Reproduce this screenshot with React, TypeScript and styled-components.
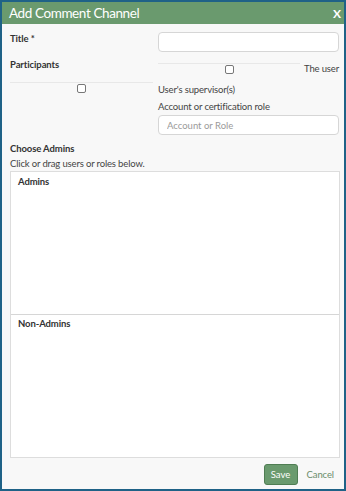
import React from "react";
import styled, { createGlobalStyle } from "styled-components";

const Global = createGlobalStyle`
  html, body { margin: 0; padding: 0; background: #ffffff; }
  * { box-sizing: border-box; }
`;

const Frame = styled.div`
  width: 346px;
  height: 491px;
  border: 2px solid #1f6287;
  background: #f8f8f8;
  display: flex;
  flex-direction: column;
  font-family: Lato, "Noto Sans", sans-serif;
  color: #333333;
`;

const Header = styled.div`
  height: 22px;
  flex: none;
  background: #6a9a6e;
  color: #ffffff;
  display: flex;
  align-items: center;
  justify-content: space-between;
  padding: 0 3px 0 7px;
  font-size: 13.5px;
  letter-spacing: -0.4px;
`;

const Close = styled.span`
  font-size: 12px;
  font-weight: 700;
  letter-spacing: 0;
`;

const Body = styled.div`
  flex: 1;
  display: flex;
  flex-direction: column;
  padding: 8px 5px 0 8px;
`;

const FormGrid = styled.div`
  display: grid;
  grid-template-columns: 143px 181px;
  column-gap: 5px;
  line-height: 13px;
`;

const FieldLabel = styled.div<{ $top?: number }>`
  font-size: 9.5px;
  font-weight: 700;
  letter-spacing: -0.1px;
  padding-top: ${(p) => p.$top ?? 0}px;
`;

const TextInput = styled.input<{ $mt?: number }>`
  display: block;
  width: 100%;
  height: 20px;
  margin-top: ${(p) => p.$mt ?? 0}px;
  border: 1px solid #d6d6d6;
  border-radius: 4px;
  background: #ffffff;
  font-family: inherit;
  font-size: 9.5px;
  padding: 0 8px;
  outline: none;
  &::placeholder { color: #9a9a9a; }
`;

const CheckRow = styled.div<{ $mt?: number }>`
  display: flex;
  align-items: center;
  height: 11px;
  gap: 4px;
  margin-top: ${(p) => p.$mt ?? 0}px;
`;

const CheckLine = styled.div`
  flex: 1;
  height: 11px;
  border-top: 1px solid #e8e8e8;
  display: flex;
  justify-content: center;
  padding-top: 1px;
`;

const Box = styled.span`
  width: 9px;
  height: 9px;
  border: 1px solid #777777;
  border-radius: 2px;
  background: #ffffff;
`;

const PlainText = styled.div<{ $top?: number }>`
  padding-top: ${(p) => p.$top ?? 0}px;
  font-size: 9.5px;
  letter-spacing: -0.15px;
  color: #444444;
`;

const SectionTitle = styled.div`
  font-size: 9.5px;
  font-weight: 700;
  letter-spacing: -0.1px;
  line-height: 13px;
  margin-top: 7px;
`;

const Hint = styled.div`
  font-size: 9.5px;
  letter-spacing: -0.15px;
  line-height: 13px;
  margin-top: 2px;
  color: #444444;
`;

const Lists = styled.div`
  margin-top: 1px;
  width: 330px;
  border: 1px solid #dddddd;
  background: #ffffff;
  display: flex;
  flex-direction: column;
`;

const ListBox = styled.div<{ $h: number; $divider?: boolean; $pt: number }>`
  height: ${(p) => p.$h}px;
  padding: ${(p) => p.$pt}px 7px 0;
  font-size: 9.5px;
  font-weight: 700;
  letter-spacing: -0.1px;
  line-height: 13px;
  border-top: ${(p) => (p.$divider ? "1px solid #d6d6d6" : "none")};
`;

const Footer = styled.div`
  height: 30px;
  flex: none;
  display: flex;
  align-items: center;
  justify-content: flex-end;
  gap: 9px;
  padding-right: 10px;
`;

const SaveButton = styled.button`
  height: 21px;
  width: 34px;
  padding: 0;
  border: 1px solid #4f7d53;
  border-radius: 3px;
  background: #6a9a6e;
  color: #ffffff;
  font-family: inherit;
  font-size: 9.5px;
`;

const CancelLink = styled.span`
  font-size: 9.5px;
  letter-spacing: -0.1px;
  color: #6a8d6b;
`;

export default function App() {
  return (
    <>
      <Global />
      <Frame>
        <Header>
          <span>Add Comment Channel</span>
          <Close>X</Close>
        </Header>
        <Body>
          <FormGrid>
            <FieldLabel>Title *</FieldLabel>
            <TextInput />
            <FieldLabel $top={6}>Participants</FieldLabel>
            <CheckRow $mt={11}>
              <CheckLine>
                <Box />
              </CheckLine>
              <PlainText>The user</PlainText>
            </CheckRow>
            <CheckRow $mt={8}>
              <CheckLine>
                <Box />
              </CheckLine>
            </CheckRow>
            <PlainText $top={9}>User's supervisor(s)</PlainText>
            <div />
            <PlainText $top={4}>Account or certification role</PlainText>
            <div />
            <TextInput placeholder="Account or Role" $mt={2} />
          </FormGrid>
          <SectionTitle>Choose Admins</SectionTitle>
          <Hint>Click or drag users or roles below.</Hint>
          <Lists>
            <ListBox $h={142} $pt={3}>
              Admins
            </ListBox>
            <ListBox $h={143} $pt={2} $divider>
              Non-Admins
            </ListBox>
          </Lists>
        </Body>
        <Footer>
          <SaveButton>Save</SaveButton>
          <CancelLink>Cancel</CancelLink>
        </Footer>
      </Frame>
    </>
  );
}
